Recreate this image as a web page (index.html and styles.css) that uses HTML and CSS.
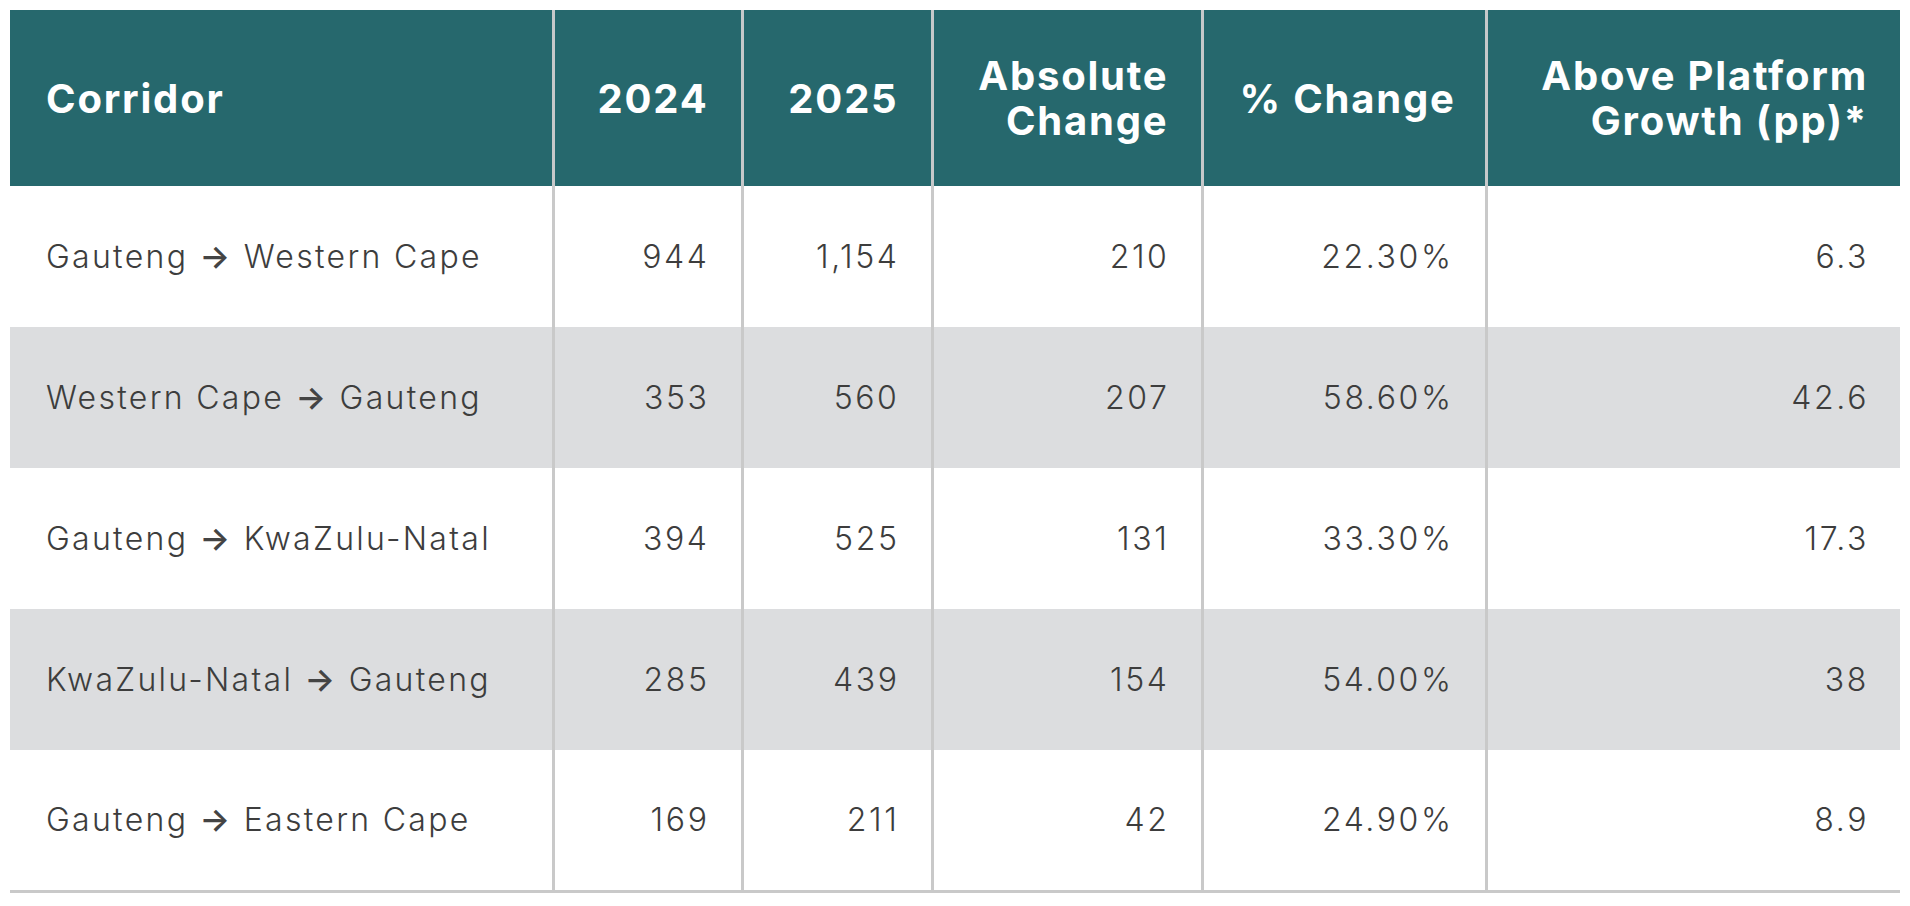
FILE: index.html
```html
<!DOCTYPE html>
<html lang="en">
<head>
<meta charset="utf-8">
<title>Corridor growth</title>
<link rel="stylesheet" href="styles.css">
</head>
<body>
<table class="data">
  <colgroup>
    <col class="c1"><col class="c2"><col class="c3"><col class="c4"><col class="c5"><col class="c6">
  </colgroup>
  <thead>
    <tr>
      <th class="left">Corridor</th>
      <th>2024</th>
      <th>2025</th>
      <th>Absolute<br>Change</th>
      <th>% Change</th>
      <th>Above Platform<br>Growth (pp)*</th>
    </tr>
  </thead>
  <tbody>
    <tr>
      <td class="left">Gauteng <span class="arrow">→</span> Western Cape</td>
      <td>944</td><td>1,154</td><td>210</td><td>22.30%</td><td>6.3</td>
    </tr>
    <tr class="alt">
      <td class="left">Western Cape <span class="arrow">→</span> Gauteng</td>
      <td>353</td><td>560</td><td>207</td><td>58.60%</td><td>42.6</td>
    </tr>
    <tr>
      <td class="left">Gauteng <span class="arrow">→</span> KwaZulu-Natal</td>
      <td>394</td><td>525</td><td>131</td><td>33.30%</td><td>17.3</td>
    </tr>
    <tr class="alt">
      <td class="left">KwaZulu-Natal <span class="arrow">→</span> Gauteng</td>
      <td>285</td><td>439</td><td>154</td><td>54.00%</td><td>38</td>
    </tr>
    <tr class="last">
      <td class="left">Gauteng <span class="arrow">→</span> Eastern Cape</td>
      <td>169</td><td>211</td><td>42</td><td>24.90%</td><td>8.9</td>
    </tr>
  </tbody>
</table>
</body>
</html>
```

FILE: styles.css
```css
html, body {
  margin: 0;
  padding: 0;
  background: #ffffff;
}
body {
  padding: 10px;
  font-family: Inter, "Noto Sans", "Liberation Sans", sans-serif;
}
.data {
  border-collapse: collapse;
  table-layout: fixed;
  width: 1890px;
}
.c1 { width: 543px; }
.c2 { width: 189px; }
.c3 { width: 190px; }
.c4 { width: 270px; }
.c5 { width: 284px; }
.c6 { width: 414px; }

.data th {
  background: #26686d;
  color: #ffffff;
  font-weight: 700;
  font-size: 40px;
  line-height: 45px;
  letter-spacing: 1.8px;
  white-space: nowrap;
  height: 176px;
  padding: 0 32px 0 36px;
  text-align: right;
  vertical-align: middle;
  border-left: 3px solid #c6c8c9;
  box-sizing: border-box;
}
.data td {
  color: #3d3d3d;
  font-weight: 300;
  font-size: 32px;
  letter-spacing: 2.6px;
  white-space: nowrap;
  height: 141px;
  padding: 0 31px 0 36px;
  text-align: right;
  vertical-align: middle;
  border-left: 3px solid #c9c9c9;
  box-sizing: border-box;
}
.data th.left {
  text-align: left;
  border-left: none;
}
.data td.left {
  text-align: left;
  border-left: none;
  letter-spacing: 2.3px;
}
.data tr.alt td {
  background: #dcdddf;
}
.data tr.last td {
  border-bottom: 3px solid #c9c9c9;
}
.arrow {
  font-weight: 600;
  color: #444444;
}
```
